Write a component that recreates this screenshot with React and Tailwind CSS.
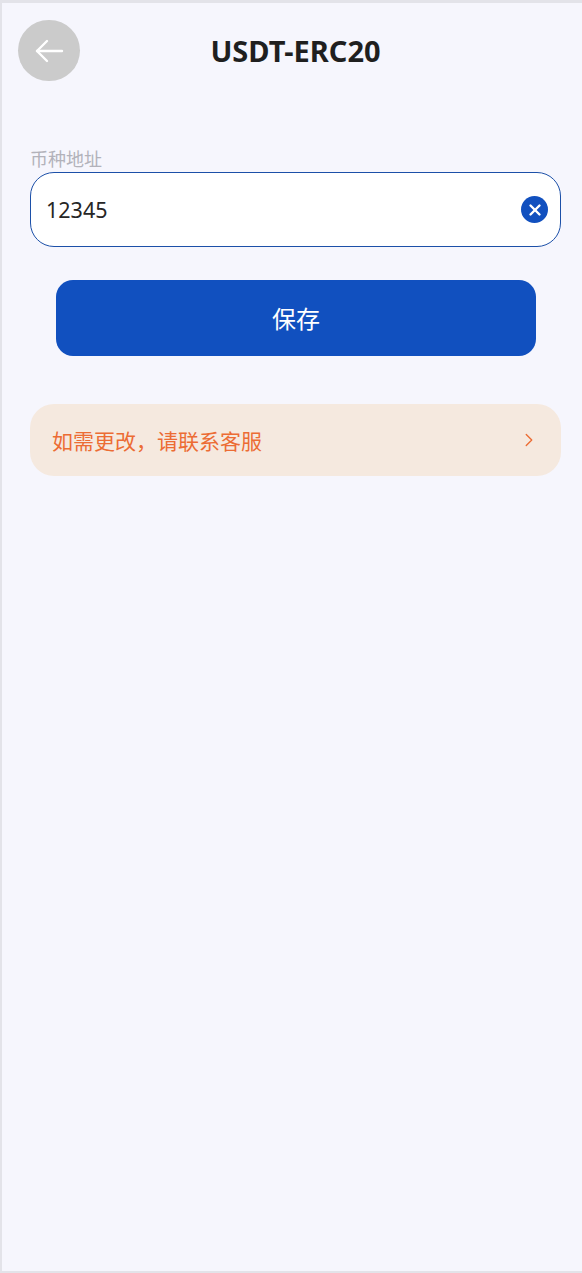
import { ChevronRight, X } from "lucide-react"

const fontStack = "font-['Noto_Sans','Noto_Sans_CJK_SC',sans-serif]"

const App = () => {
  return (
    <div className={`h-[1273px] w-[582px] overflow-hidden border-t-[3px] border-b-[2px] border-l-[2px] border-[#e3e3e9] bg-[#f6f6fd] ${fontStack}`}>
      {/* Header */}
      <div className="relative flex h-[61px] mt-[17px] items-center justify-center pl-[7px]">
        <button className="absolute left-[16px] top-0 flex h-[61px] w-[62px] items-center justify-center rounded-full bg-[#cbcbcb]">
          <svg className="h-[26px] w-[30px] text-white" viewBox="0 0 30 26" fill="none" stroke="currentColor" strokeWidth="2.4" strokeLinecap="round" strokeLinejoin="round">
            <path d="M28 13H3" />
            <path d="M13 3 3 13l10 10" />
          </svg>
        </button>
        <h1 className="text-[29px] font-bold leading-none text-[#1f1f1f]">USDT-ERC20</h1>
      </div>

      {/* Address field */}
      <div className="mt-[66px] ml-[28px] w-[531px]">
        <label className="block h-[25px] text-[18px] leading-[25px] text-[#b2b2ba]">币种地址</label>
        <div className="flex h-[75px] items-center justify-between rounded-[24px] border border-[#1c50a8] bg-white pl-[15px] pr-[12px]">
          <span className="pt-[2px] text-[21.5px] text-[#262626]">12345</span>
          <span className="flex h-[27px] w-[27px] items-center justify-center rounded-full bg-[#1150bf]">
            <X className="h-[18px] w-[18px] text-white" strokeWidth={3.2} />
          </span>
        </div>
      </div>

      {/* Save */}
      <div className="mt-[33px] ml-[54px] w-[480px]">
        <button className="flex h-[76px] w-full items-center justify-center rounded-[17px] bg-[#1150bf] pt-[2px] text-[24px] text-white">
          保存
        </button>
      </div>

      {/* Contact support */}
      <div className="mt-[48px] ml-[28px] flex h-[72px] w-[531px] items-center justify-between rounded-[24px] bg-[#f5e9df] pl-[22px] pr-[21px]">
        <span className="pt-[3px] text-[21px] text-[#ec6c34]">{"如需更改\uFF0C请联系客服"}</span>
        <ChevronRight className="h-[22px] w-[22px] text-[#ec6c34]" strokeWidth={1.5} />
      </div>
    </div>
  )
}

export default App
